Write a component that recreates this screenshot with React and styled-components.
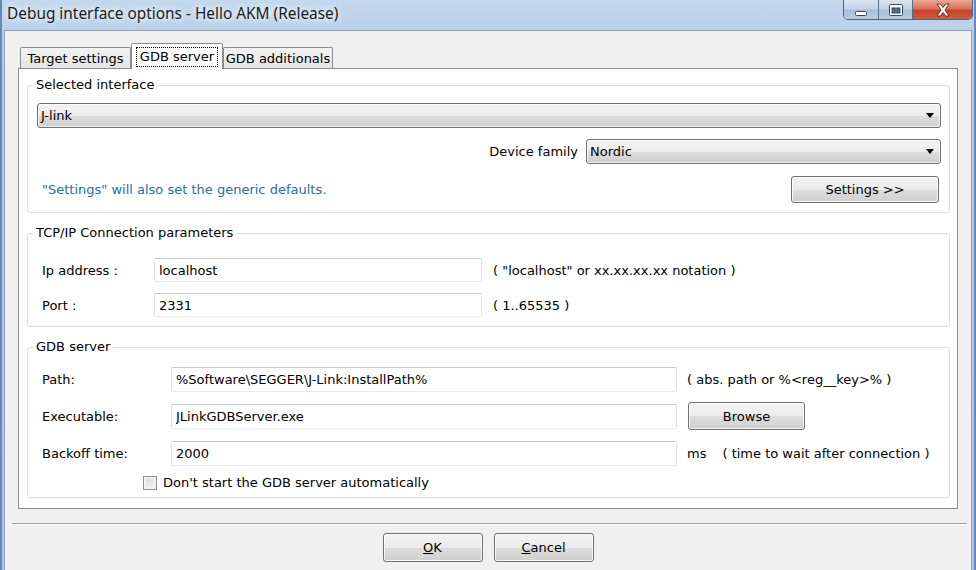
import React from 'react';
import styled, { createGlobalStyle } from 'styled-components';

const GlobalStyle = createGlobalStyle`
  html, body {
    margin: 0;
    padding: 0;
  }
  body {
    width: 976px;
    height: 570px;
    overflow: hidden;
    font-family: "DejaVu Sans", Tahoma, sans-serif;
    font-size: 13px;
    color: #000;
  }
  * {
    box-sizing: border-box;
  }
`;

const btnGradient = 'linear-gradient(#f3f3f3 0%, #ebebeb 50%, #dddddd 51%, #cfcfcf 100%)';

export const Window = styled.div`
  width: 976px;
  height: 570px;
  display: flex;
  flex-direction: column;
  overflow: hidden;
  background: linear-gradient(to bottom, #c4d8ee 0%, #b9d0ea 30px, #a9c3e2 100%);
  border-left: 2px solid #6587ba;
  border-right: 2px solid #6587ba;
`;

export const TitleBar = styled.div`
  flex: none;
  height: 30px;
  display: flex;
  align-items: flex-start;
`;

export const Title = styled.div`
  padding: 4px 0 0 5px;
  font-family: "Noto Sans", "Open Sans", sans-serif;
  font-size: 15.4px;
  line-height: 20px;
  color: #1a1a1a;
  text-shadow: 0 0 6px #fff, 0 0 10px rgba(255, 255, 255, 0.8);
`;

export const CaptionGroup = styled.div`
  margin-left: auto;
  margin-right: 1px;
  display: flex;
  height: 20px;
  border: 1px solid #4e6282;
  border-top: none;
  border-radius: 0 0 5px 5px;
  overflow: hidden;
`;

export const CaptionButton = styled.div`
  width: ${p => p.w}px;
  height: 19px;
  display: flex;
  align-items: center;
  justify-content: center;
  border-left: ${p => (p.first ? 'none' : '1px solid #5a6e8e')};
  background: ${p =>
    p.close
      ? 'linear-gradient(#eaa897 0%, #d9715d 45%, #c7432a 55%, #d25a3c 100%)'
      : 'linear-gradient(#dce6f2 0%, #c4d3e6 45%, #aabdd7 55%, #bccde2 100%)'};
`;

export const Client = styled.div`
  flex: 1;
  margin: 0 2px;
  background: #f0f0f0;
  border: 1px solid #8ea3c0;
  border-bottom: none;
  padding: 12px 13px 0;
  display: flex;
  flex-direction: column;
`;

export const TabRow = styled.div`
  height: 25px;
  display: flex;
  align-items: flex-end;
  padding-left: 2px;
`;

export const Tab = styled.div`
  width: ${p => p.w}px;
  height: ${p => (p.active ? 26 : 21)}px;
  margin-bottom: ${p => (p.active ? -1 : 0)}px;
  position: relative;
  z-index: ${p => (p.active ? 1 : 0)};
  display: flex;
  align-items: center;
  justify-content: center;
  border: 1px solid #898c95;
  border-bottom: none;
  border-radius: 2px 2px 0 0;
  background: ${p => (p.active ? '#fff' : 'linear-gradient(#f3f3f3, #e5e5e5)')};
  white-space: nowrap;
`;

export const FocusText = styled.span`
  border: 1px dotted #000;
  padding: 1px 3px;
  line-height: 16px;
`;

export const Panel = styled.div`
  background: #fff;
  border: 1px solid #898c95;
  padding: 8px 7px 10px 8px;
  display: flex;
  flex-direction: column;
  gap: 12px;
`;

export const GroupBox = styled.fieldset`
  margin: 0;
  min-width: 0;
  border: 1px solid #d5dfe5;
  border-radius: 3px;
  padding: ${p => p.pad};
`;

export const Legend = styled.legend`
  margin-left: -4px;
  padding: 0 3px;
  line-height: 16px;
`;

export const Stack = styled.div`
  display: flex;
  flex-direction: column;
  gap: 11px;
`;

export const Row = styled.div`
  display: flex;
  align-items: center;
  justify-content: ${p => p.justify || 'flex-start'};
  gap: ${p => p.gap || 0}px;
  padding-left: ${p => p.indent || 0}px;
  margin-top: ${p => p.top || 0}px;
  white-space: nowrap;
`;

export const Combo = styled.div`
  width: ${p => (p.w ? `${p.w}px` : '100%')};
  height: 25px;
  display: flex;
  align-items: center;
  justify-content: space-between;
  padding: 0 6px 0 3px;
  border: 1px solid #707070;
  border-radius: 3px;
  background: ${btnGradient};
  box-shadow: inset 0 0 0 1px rgba(255, 255, 255, 0.7);
`;

export const Hint = styled.span`
  color: ${p => p.color || '#000'};
  padding-left: ${p => p.indent || 0}px;
  white-space: nowrap;
`;

export const Button = styled.button`
  width: ${p => p.w}px;
  height: ${p => p.h}px;
  margin: ${p => p.m || 0};
  padding: 0;
  font: inherit;
  color: #000;
  border: 1px solid #707070;
  border-radius: 3px;
  background: ${btnGradient};
  box-shadow: inset 0 0 0 1px rgba(255, 255, 255, 0.8);
`;

export const FieldGrid = styled.div`
  display: grid;
  grid-template-columns: ${p => p.cols};
  grid-auto-rows: ${p => p.rowH}px;
  column-gap: ${p => p.colGap}px;
  row-gap: ${p => p.rowGap}px;
  align-items: center;
  padding-left: 5px;
`;

export const TextField = styled.input`
  width: 100%;
  height: 100%;
  padding: 0 4px;
  font: inherit;
  color: #000;
  background: #fff;
  border: 1px solid;
  border-color: #c5c8ce #dfe2e8 #e6e9ee #dfe2e8;
  border-radius: 2px;
  outline: none;
`;

export const CheckBox = styled.span`
  width: 14px;
  height: 14px;
  flex: none;
  border: 1px solid #8e8f8f;
  background: linear-gradient(135deg, #d4d6da, #f7f7f7);
  box-shadow: inset 0 0 0 2px #f1f1f1;
`;

export const Separator = styled.div`
  height: 2px;
  margin: 14px -9px 0 -6px;
  border-top: 1px solid #a0a0a0;
  border-bottom: 1px solid #fff;
`;

export const ButtonBar = styled.div`
  display: flex;
  justify-content: center;
  gap: 11px;
  margin-top: 8px;
`;

const Arrow = () => (
  <svg width="8" height="5" viewBox="0 0 8 5">
    <path d="M0 0h8L4 5z" fill="#000" />
  </svg>
);

const MinGlyph = () => (
  <svg width="12" height="12" viewBox="0 0 12 12">
    <rect x="0.5" y="7.5" width="11" height="4" rx="1" fill="#fff" stroke="#3b4a63" />
  </svg>
);

const MaxGlyph = () => (
  <svg width="14" height="12" viewBox="0 0 14 12">
    <rect x="0.5" y="0.5" width="13" height="11" rx="1" fill="#fff" stroke="#3b4a63" />
    <rect x="3" y="4" width="8" height="5" fill="#4a6a9a" stroke="#3b4a63" />
  </svg>
);

const CloseGlyph = () => (
  <svg width="16" height="14" viewBox="0 0 16 14">
    <path
      d="M2 1h3.5L8 4.5 10.5 1H14l-4 6 4 6h-3.5L8 9.5 5.5 13H2l4-6z"
      fill="#fff"
      stroke="#5a2418"
      strokeWidth="0.9"
      strokeLinejoin="round"
    />
  </svg>
);

const App = () => (
  <Window>
    <GlobalStyle />
    <TitleBar>
      <Title>Debug interface options - Hello AKM (Release)</Title>
      <CaptionGroup>
        <CaptionButton w={34} first>
          <MinGlyph />
        </CaptionButton>
        <CaptionButton w={34}>
          <MaxGlyph />
        </CaptionButton>
        <CaptionButton w={60} close>
          <CloseGlyph />
        </CaptionButton>
      </CaptionGroup>
    </TitleBar>

    <Client>
      <TabRow>
        <Tab w={111}>Target settings</Tab>
        <Tab w={92} active>
          <FocusText>GDB server</FocusText>
        </Tab>
        <Tab w={110}>GDB additionals</Tab>
      </TabRow>

      <Panel>
        <GroupBox pad="10px 8px 9px 9px">
          <Legend>Selected interface</Legend>
          <Stack>
            <Combo>
              <span>J-link</span>
              <Arrow />
            </Combo>
            <Row justify="flex-end" gap={8}>
              <span>Device family</span>
              <Combo w={355}>
                <span>Nordic</span>
                <Arrow />
              </Combo>
            </Row>
            <Row justify="space-between" top={1}>
              <Hint color="#2a6ea6" indent={5}>"Settings" will also set the generic defaults.</Hint>
              <Button w={148} h={27} m="0 2px 0 0">Settings &gt;&gt;</Button>
            </Row>
          </Stack>
        </GroupBox>

        <GroupBox pad="17px 8px 9px 9px">
          <Legend>TCP/IP Connection parameters</Legend>
          <FieldGrid cols="101px 328px auto" rowH={24} colGap={11} rowGap={11}>
            <span>Ip address :</span>
            <TextField readOnly value="localhost" />
            <Hint>( "localhost" or xx.xx.xx.xx notation )</Hint>
            <span>Port :</span>
            <TextField readOnly value="2331" />
            <Hint>( 1..65535 )</Hint>
          </FieldGrid>
        </GroupBox>

        <GroupBox pad="12px 8px 7px 9px">
          <Legend>GDB server</Legend>
          <FieldGrid cols="119px 506px auto" rowH={25} colGap={10} rowGap={12}>
            <span>Path:</span>
            <TextField readOnly value="%Software\SEGGER\J-Link:InstallPath%" />
            <Hint>( abs. path or %&lt;reg__key&gt;% )</Hint>
            <span>Executable:</span>
            <TextField readOnly value="JLinkGDBServer.exe" />
            <Row>
              <Button w={117} h={28} m="-2px 0 -1px 1px">Browse</Button>
            </Row>
            <span>Backoff time:</span>
            <TextField readOnly value="2000" />
            <Row gap={16}>
              <span>ms</span>
              <span>( time to wait after connection )</span>
            </Row>
          </FieldGrid>
          <Row indent={106} top={9} gap={6}>
            <CheckBox />
            <span>Don't start the GDB server automatically</span>
          </Row>
        </GroupBox>
      </Panel>

      <Separator />

      <ButtonBar>
        <Button w={100} h={29}>
          <u>O</u>K
        </Button>
        <Button w={100} h={29}>
          <u>C</u>ancel
        </Button>
      </ButtonBar>
    </Client>
  </Window>
);

export default App;
